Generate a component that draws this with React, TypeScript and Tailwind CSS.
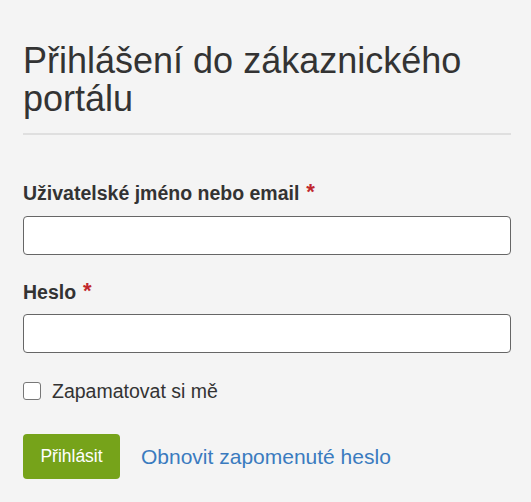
export default function App() {
  return (
    <div className="min-h-screen bg-[#f4f4f4] font-['Liberation_Sans',Arial,sans-serif] text-[#333]">
      <div className="pl-[23px] pr-[20px]">
        <h1 className="pt-[42px] pb-[15px] border-b-2 border-[#dfdfdf] text-[36px] leading-[38px] font-normal">
          Přihlášení do zákaznického portálu
        </h1>

        <form className="pt-[46px]" onSubmit={(e) => e.preventDefault()}>
          <label className="flex items-start text-[19.5px] leading-[24px] font-bold">
            Uživatelské jméno nebo email
            <span className="ml-[7px] text-[#c1272d] text-[22px] leading-[22px]">*</span>
          </label>
          <input type="text" className="mt-[11px] block w-full h-[39px] rounded-[4px] border border-[#666] bg-white px-3 outline-none" />

          <label className="mt-[25px] flex items-start text-[19.5px] leading-[24px] font-bold">
            Heslo
            <span className="ml-[7px] text-[#c1272d] text-[22px] leading-[22px]">*</span>
          </label>
          <input type="password" className="mt-[10px] block w-full h-[39px] rounded-[4px] border border-[#666] bg-white px-3 outline-none" />

          <label className="mt-[26px] flex items-center gap-[11px] text-[19.5px] leading-[24px]">
            <span className="w-[18px] h-[18px] rounded-[3px] border border-[#777] bg-white" />
            Zapamatovat si mě
          </label>

          <div className="mt-[31px] flex items-center gap-[21px]">
            <button type="submit" className="h-[45px] w-[97px] rounded-[4px] bg-[#76a31a] text-white text-[17.5px]">
              Přihlásit
            </button>
            <a href="#" className="text-[21px] leading-[24px] text-[#3a7bbf]">Obnovit zapomenuté heslo</a>
          </div>
        </form>
      </div>
    </div>
  );
}
